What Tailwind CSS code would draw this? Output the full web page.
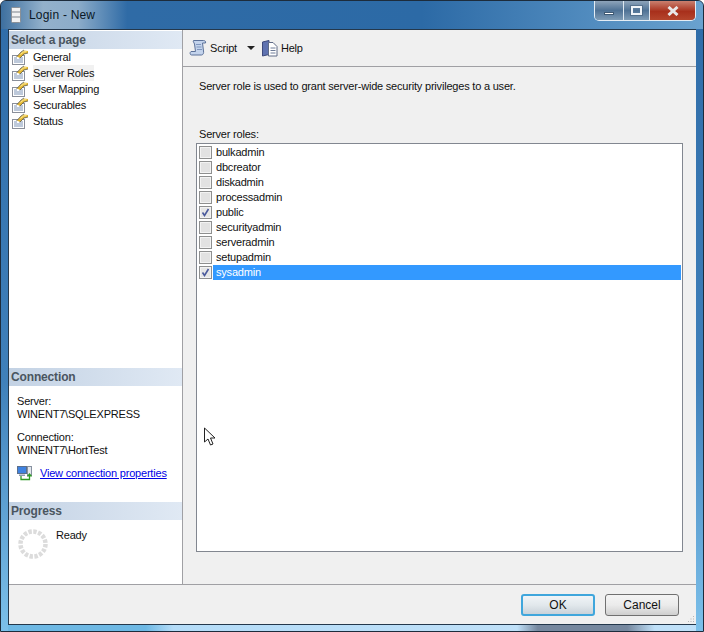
<!DOCTYPE html>
<html lang="en">
<head>
  <meta charset="UTF-8" />
  <title>Login - New</title>
  <script src="https://cdn.jsdelivr.net/npm/@tailwindcss/browser@4"></script>
</head>
<body class="bg-white">
<svg width="0" height="0" class="absolute">
  <defs>
    <symbol id="page" viewBox="0 0 16 16">
      <rect x="0.500" y="6.500" width="12" height="9" fill="#fff" stroke="#8a8f9a"/>
      <path d="M2 9h3M2 11h9M2 13h9M7 9h4" stroke="#7d93b5"/>
      <path d="M5 7.500 9 3.500 12 1.500 16 2 16 4 12 5 8 9z" fill="#e3b52f"/>
      <path d="M4.500 8 9 3l3-2M8 9l4-4 4-1" fill="none" stroke="#5e5a48" stroke-width=".8"/>
      <path d="M8.500 5.500 11.500 3l3-.3" fill="none" stroke="#fff0a0"/>
    </symbol>
    <symbol id="check" viewBox="0 0 13 13">
      <rect x=".5" y=".5" width="12" height="12" fill="#f3f3f3" stroke="#8e8f8f"/>
      <rect x="2" y="2" width="9" height="9" fill="#e2e2e2"/>
    </symbol>
    <symbol id="checked" viewBox="0 0 13 13">
      <rect x=".5" y=".5" width="12" height="12" fill="#f3f3f3" stroke="#8e8f8f"/>
      <rect x="2" y="2" width="9" height="9" fill="#e6e6e6"/>
      <path d="M3.500 6.500 5.500 9.500 9.500 3" fill="none" stroke="#4a5a9c" stroke-width="1.600"/>
    </symbol>
  </defs>
</svg>

<div class="relative w-[704px] h-[632px] overflow-hidden bg-[linear-gradient(180deg,#2f6ca8_0%,#3f80ba_60%,#7cc0ea_100%)] border border-[#1d2c3c] rounded-t-[6px] flex flex-col font-['Liberation_Sans',sans-serif] text-[11px] tracking-[-0.2px] text-[#111]">

  <!-- Title bar -->
  <div class="h-[28px] shrink-0 flex items-start pl-[10px] bg-[linear-gradient(90deg,#3d6f9f_0%,#93b1cb_6%,#8cacc9_11%,#2f6ba6_18%,#2c6aa6_60%,#6aa2cf_100%)]">
    <svg class="mt-[6px]" width="11" height="16" viewBox="0 0 11 16">
      <rect x=".5" y=".5" width="9" height="15" rx="1" fill="#f2f2f2" stroke="#8b9097"/>
      <path d="M1 5h8M1 10h8" stroke="#7d838b"/>
    </svg>
    <span class="ml-[7px] mt-[7px] text-[12px] tracking-[0.2px] leading-[15px] text-[#0a1826]">Login - New</span>
    <div class="ml-auto mr-[7px] flex h-[20px] w-[102px] rounded-b-[5px] border border-t-0 border-[#e4edf5] overflow-hidden">
      <div class="w-[29px] flex justify-center items-center border-r border-[#dfe8f0] bg-[linear-gradient(180deg,#8ea4ba,#4f7295_50%,#7f9cb6)]">
        <div class="w-[10px] h-[3px] mt-[6px] bg-white border border-[#405a74]"></div>
      </div>
      <div class="w-[26px] flex justify-center items-center border-r border-[#dfe8f0] bg-[linear-gradient(180deg,#8ea4ba,#4f7295_50%,#7f9cb6)]">
        <div class="w-[11px] h-[9px] border-2 border-[#f0f4f8] outline outline-[#405a74]/50"></div>
      </div>
      <div class="flex-1 flex justify-center items-center bg-[linear-gradient(180deg,#c9806f,#a8301c_55%,#b5452c)]">
        <svg width="12" height="10" viewBox="0 0 12 10"><path d="M1.500 1 10.500 9M10.500 1 1.500 9" stroke="#e8e8e8" stroke-width="3"/></svg>
      </div>
    </div>
  </div>

  <!-- Client area -->
  <div class="mx-[7px] w-[688px] h-[595px] shrink-0 border-t border-l border-[#24384c] bg-[#f0f0f0] flex flex-col">
    <div class="flex h-[555px] border-b border-[#a0a0a4]">

      <!-- Sidebar -->
      <div class="w-[174px] shrink-0 bg-white border-r border-[#a0a0a4] flex flex-col">
        <div class="mt-px h-[18px] pl-[2px] text-[12px] tracking-[-0.15px] leading-[18px] font-bold text-[#4a5560] bg-[linear-gradient(90deg,#c3d2e4,#e0e9f4)]">Select a page</div>
        <div class="flex flex-col pl-[3px]">
          <div class="h-[16px] flex items-center gap-[5px]"><svg width="16" height="16"><use href="#page"/></svg><span>General</span></div>
          <div class="h-[16px] flex items-center gap-[5px]"><svg width="16" height="16"><use href="#page"/></svg><span class="bg-[#f1f1f1]">Server Roles</span></div>
          <div class="h-[16px] flex items-center gap-[5px]"><svg width="16" height="16"><use href="#page"/></svg><span>User Mapping</span></div>
          <div class="h-[16px] flex items-center gap-[5px]"><svg width="16" height="16"><use href="#page"/></svg><span>Securables</span></div>
          <div class="h-[16px] flex items-center gap-[5px]"><svg width="16" height="16"><use href="#page"/></svg><span>Status</span></div>
        </div>

        <div class="mt-[239px] h-[18px] pl-[2px] text-[12px] tracking-[-0.15px] leading-[18px] font-bold text-[#4a5560] bg-[linear-gradient(90deg,#c3d2e4,#e0e9f4)]">Connection</div>
        <div class="pl-[8px] pt-[9px] leading-[13px]">
          <div>Server:</div>
          <div>WINENT7\SQLEXPRESS</div>
          <div class="mt-[10px]">Connection:</div>
          <div>WINENT7\HortTest</div>
          <div class="mt-[8px] flex items-center gap-[7px] h-[16px]">
            <svg width="16" height="16" viewBox="0 0 16 16">
              <rect x=".5" y="1.500" width="9" height="7" fill="#3f82e0" stroke="#5b6f8c"/>
              <rect x="2" y="9.500" width="6" height="1.500" fill="#8e99ad"/>
              <rect x="10.500" y="1.500" width="4" height="9" fill="#e4e8ee" stroke="#8791a0"/>
              <path d="M4 11v3.500h8.500V10M10.500 11.500 12.500 9l2 2.500" fill="none" stroke="#2f9a26" stroke-width="1.300"/>
            </svg>
            <a href="#" class="text-[#0000e6] underline whitespace-nowrap">View connection properties</a>
          </div>
        </div>

        <div class="mt-[21px] h-[18px] pl-[2px] text-[12px] tracking-[-0.15px] leading-[18px] font-bold text-[#4a5560] bg-[linear-gradient(90deg,#c3d2e4,#e0e9f4)]">Progress</div>
        <div class="flex pl-[8px] pt-[8px]">
          <svg width="32" height="32" viewBox="0 0 32 32">
            <circle cx="16" cy="16" r="12.500" fill="none" stroke="#dcdcdc" stroke-width="4.500" stroke-dasharray="3.400 1.500"/>
          </svg>
          <span class="ml-[7px] leading-[15px]">Ready</span>
        </div>
      </div>

      <!-- Main panel -->
      <div class="flex-1 flex flex-col">
        <div class="h-[37px] shrink-0 border-b border-[#a0a0a4] flex items-center pl-[6px]">
          <svg width="20" height="20" viewBox="0 0 20 20">
            <path d="M4.500 2.500h10c1.500 0 2.500 1 2 2.500h-3l1 8c.5 2-.5 4-2 4H2.500C1 17 .5 14.500 2 13.500h4.500L5.500 6C5 4.500 3.500 3 4.500 2.500z" fill="#c3d3ec" stroke="#5b7199"/>
            <path d="M7 6.500h5M7.500 9h5M8 11.500h5" stroke="#7f96bd"/>
          </svg>
          <span class="ml-[1px]">Script</span>
          <div class="ml-[10px] w-0 h-0 border-x-[4px] border-t-[4px] border-x-transparent border-t-[#222]"></div>
          <svg class="ml-[6px]" width="18" height="18" viewBox="0 0 18 18">
            <path d="M1.500 3 8 1.500v14L1.500 17z" fill="#5f72b0" stroke="#3e4a7c"/>
            <path d="M7.500 3.500h4.500l4 4v9.500H7.500z" fill="#fff" stroke="#5f6b86"/>
            <path d="M9.500 9h5M9.500 11.500h5M9.500 14h5" stroke="#6f7d98"/>
          </svg>
          <span class="ml-[2px]">Help</span>
        </div>
        <div class="pl-[13px] pr-[13px] flex-1 flex flex-col">
          <p class="mt-[12px] pl-[3px] leading-[15px]">Server role is used to grant server-wide security privileges to a user.</p>
          <p class="mt-[33px] pl-[3px] leading-[15px]">Server roles:</p>
          <div class="mt-[1px] h-[409px] border border-[#828790] bg-white pt-px pl-[2px] pr-px flex flex-col">
            <div class="h-[15px] flex items-center gap-[1px]"><svg width="13" height="13"><use href="#check"/></svg><span class="px-[3px] flex-1 leading-[15px]">bulkadmin</span></div>
            <div class="h-[15px] flex items-center gap-[1px]"><svg width="13" height="13"><use href="#check"/></svg><span class="px-[3px] flex-1 leading-[15px]">dbcreator</span></div>
            <div class="h-[15px] flex items-center gap-[1px]"><svg width="13" height="13"><use href="#check"/></svg><span class="px-[3px] flex-1 leading-[15px]">diskadmin</span></div>
            <div class="h-[15px] flex items-center gap-[1px]"><svg width="13" height="13"><use href="#check"/></svg><span class="px-[3px] flex-1 leading-[15px]">processadmin</span></div>
            <div class="h-[15px] flex items-center gap-[1px]"><svg width="13" height="13"><use href="#checked"/></svg><span class="px-[3px] flex-1 leading-[15px]">public</span></div>
            <div class="h-[15px] flex items-center gap-[1px]"><svg width="13" height="13"><use href="#check"/></svg><span class="px-[3px] flex-1 leading-[15px]">securityadmin</span></div>
            <div class="h-[15px] flex items-center gap-[1px]"><svg width="13" height="13"><use href="#check"/></svg><span class="px-[3px] flex-1 leading-[15px]">serveradmin</span></div>
            <div class="h-[15px] flex items-center gap-[1px]"><svg width="13" height="13"><use href="#check"/></svg><span class="px-[3px] flex-1 leading-[15px]">setupadmin</span></div>
            <div class="h-[15px] flex items-center gap-[1px]"><svg width="13" height="13"><use href="#checked"/></svg><span class="px-[3px] flex-1 leading-[15px] bg-[#3399ff] text-white">sysadmin</span></div>
          </div>
        </div>
      </div>
    </div>

    <!-- Button bar -->
    <div class="relative flex-1 flex justify-end items-start gap-[10px] pt-[9px] pr-[17px]">
      <button class="w-[74px] h-[22px] rounded-[3px] border-2 border-[#3fa6dc] bg-[linear-gradient(180deg,#f0f4f7,#e2e8ec_50%,#c9d2d9)] text-[12px] tracking-normal text-[#111]">OK</button>
      <button class="w-[74px] h-[22px] rounded-[3px] border border-[#707070] bg-[linear-gradient(180deg,#f4f4f4,#ebebeb_50%,#cfcfcf)] text-[12px] tracking-normal text-[#111]">Cancel</button>
      <svg class="absolute right-px bottom-px" width="8" height="8" viewBox="0 0 8 8">
        <path d="M6 1h1v1H6zM6 3.500h1v1H6zM6 6h1v1H6zM3.500 3.500h1v1h-1zM3.500 6h1v1h-1zM1 6h1v1H1z" fill="#b5b5b5"/>
      </svg>
    </div>
  </div>

  <!-- Bottom frame -->
  <div class="flex-1 mx-[7px] border-t border-[#24384c] bg-[linear-gradient(90deg,#6db8e4_0%,#6db8e4_20%,#b4dcf8_24%,#bfe0f8_74%,#76889f_77%,#76889f_90%,#bfe0f8_94%)]"></div>

  <!-- Mouse pointer -->
  <svg class="absolute left-[202px] top-[426px]" width="15" height="20" viewBox="0 0 15 20">
    <path d="M1.500 1v14l3.500-3 2.500 6 2.500-1-2.500-6h4.500z" fill="#fff" stroke="#222"/>
  </svg>
</div>
</body>
</html>
